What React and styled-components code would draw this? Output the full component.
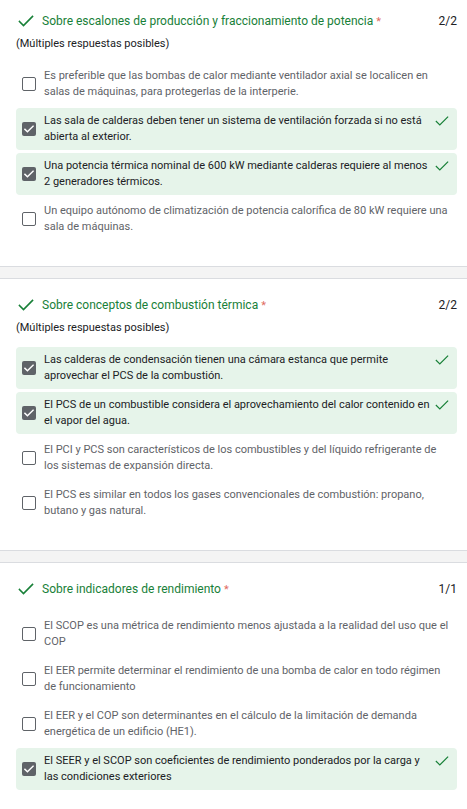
import styled, { createGlobalStyle } from "styled-components";

const GlobalStyle = createGlobalStyle`
  html, body {
    margin: 0;
    padding: 0;
    background: #f4f4f4;
    overflow: hidden;
  }
  body {
    font-family: Roboto, "Liberation Sans", Arial, sans-serif;
    color: #202124;
  }
`;

const questions = [
  {
    title: "Sobre escalones de producción y fraccionamiento de potencia",
    score: "2/2",
    multiple: true,
    options: [
      { text: "Es preferible que las bombas de calor mediante ventilador axial se localicen en salas de máquinas, para protegerlas de la interperie." },
      { text: "Las sala de calderas deben tener un sistema de ventilación forzada si no está abierta al exterior.", checked: true },
      { text: "Una potencia térmica nominal de 600 kW mediante calderas requiere al menos 2 generadores térmicos.", checked: true },
      { text: "Un equipo autónomo de climatización de potencia calorífica de 80 kW requiere una sala de máquinas." },
    ],
  },
  {
    title: "Sobre conceptos de combustión térmica",
    score: "2/2",
    multiple: true,
    options: [
      { text: "Las calderas de condensación tienen una cámara estanca que permite aprovechar el PCS de la combustión.", checked: true },
      { text: "El PCS de un combustible considera el aprovechamiento del calor contenido en el vapor del agua.", checked: true },
      { text: "El PCI y PCS son característicos de los combustibles y del líquido refrigerante de los sistemas de expansión directa." },
      { text: "El PCS es similar en todos los gases convencionales de combustión: propano, butano y gas natural." },
    ],
  },
  {
    title: "Sobre indicadores de rendimiento",
    score: "1/1",
    options: [
      { text: "El SCOP es una métrica de rendimiento menos ajustada a la realidad del uso que el COP" },
      { text: "El EER permite determinar el rendimiento de una bomba de calor en todo régimen de funcionamiento" },
      { text: "El EER y el COP son determinantes en el cálculo de la limitación de demanda energética de un edificio (HE1)." },
      { text: "El SEER y el SCOP son coeficientes de rendimiento ponderados por la carga y las condiciones exteriores", checked: true },
    ],
  },
];

const Page = styled.div`
  display: flex;
  flex-direction: column;
  gap: 11px;
  margin-top: -6px;
`;

const Card = styled.section`
  margin: 0 -8px;
  padding: 16px 17px 26px 23px;
  background: #fff;
  border: 1px solid #dadce0;
  border-radius: 8px;
`;

const Header = styled.div`
  display: flex;
  align-items: center;
  height: 20px;
  margin-bottom: ${(p) => (p.$hasNote ? "5px" : "14px")};
`;

const HeaderCheck = styled.svg`
  width: 20px;
  height: 20px;
  margin-right: 6px;
  flex-shrink: 0;
`;

const Title = styled.div`
  flex: 1;
  font-size: 12px;
  color: #188038;

  span {
    color: #e06c5f;
    font-size: 11px;
  }
`;

const Score = styled.div`
  font-size: 12px;
  color: #202124;
`;

const Note = styled.div`
  font-size: 11px;
  line-height: 16px;
  margin-bottom: 11px;
`;

const Options = styled.div`
  display: flex;
  flex-direction: column;
  gap: 3px;
`;

const Row = styled.div`
  display: flex;
  align-items: center;
  gap: 8px;
  min-height: 32px;
  padding: 5px 8px 5px 6px;
  border-radius: 4px;
  background: ${(p) => (p.$checked ? "#e6f4ea" : "transparent")};
`;

const Box = styled.div`
  width: 14px;
  height: 14px;
  box-sizing: border-box;
  flex-shrink: 0;
  border-radius: 2px;
  border: ${(p) => (p.$checked ? "none" : "1.5px solid #5f6368")};
  background: ${(p) => (p.$checked ? "#5f6368" : "#fff")};
  display: flex;
  align-items: center;
  justify-content: center;
`;

const Label = styled.div`
  flex: 1;
  font-size: 11px;
  line-height: 16px;
  color: ${(p) => (p.$checked ? "#202124" : "#5f6368")};
`;

const RowCheck = styled.svg`
  width: 14px;
  height: 16px;
  flex-shrink: 0;
  align-self: flex-start;
  margin-left: -4px;
`;

const Check = ({ color = "#188038", width = 1.6 }) => (
  <polyline
    points="1.5,6.5 5.5,10.5 14.5,1.5"
    fill="none"
    stroke={color}
    strokeWidth={width}
    strokeLinecap="square"
  />
);

function Option({ text, checked }) {
  return (
    <Row $checked={checked}>
      <Box $checked={checked}>
        {checked && (
          <svg width="10" height="8" viewBox="0 0 16 12">
            <Check color="#fff" width={2.4} />
          </svg>
        )}
      </Box>
      <Label $checked={checked}>{text}</Label>
      {checked && (
        <RowCheck viewBox="0 -2 16 16">
          <Check width={1.4} />
        </RowCheck>
      )}
    </Row>
  );
}

export default function App() {
  return (
    <>
      <GlobalStyle />
      <Page>
        {questions.map((q) => (
          <Card key={q.title}>
            <Header $hasNote={q.multiple}>
              <HeaderCheck viewBox="-2 -4 20 20">
                <Check width={1.6} />
              </HeaderCheck>
              <Title>
                {q.title} <span>*</span>
              </Title>
              <Score>{q.score}</Score>
            </Header>
            {q.multiple && <Note>(Múltiples respuestas posibles)</Note>}
            <Options>
              {q.options.map((o) => (
                <Option key={o.text} {...o} />
              ))}
            </Options>
          </Card>
        ))}
      </Page>
    </>
  );
}
